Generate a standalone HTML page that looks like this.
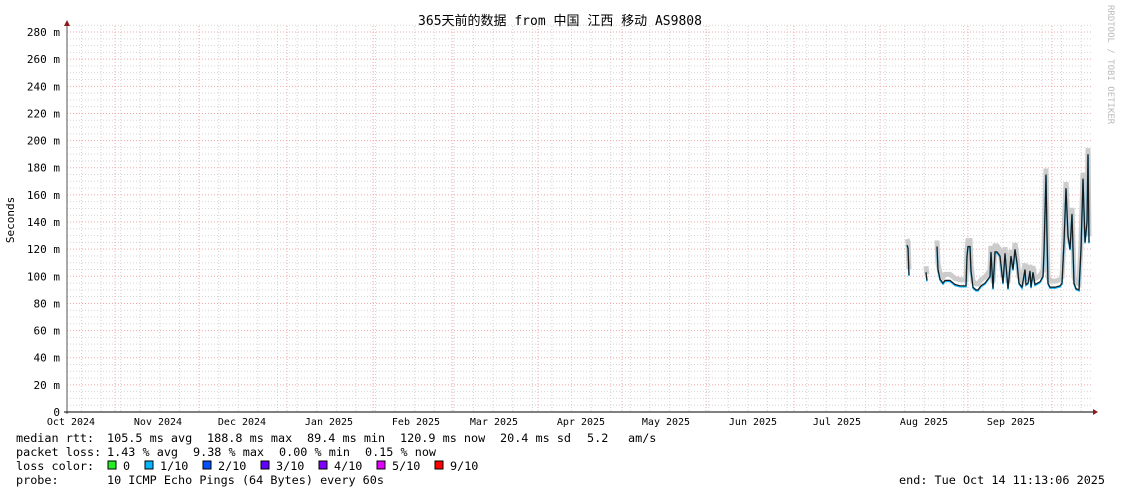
<!DOCTYPE html><html><head><meta charset="utf-8"><style>
html,body{margin:0;padding:0;background:#fff;width:1121px;height:494px;overflow:hidden}
text{font-family:"DejaVu Sans Mono","Liberation Mono","Noto Sans CJK SC",monospace;font-size:11px;fill:#000}
.lg{font-size:11.8px}
</style></head><body>
<svg id="s" width="1121" height="494" xmlns="http://www.w3.org/2000/svg">
<rect width="1121" height="494" fill="#fff"/>
<g id="grid"></g>
<text x="560" y="25" text-anchor="middle" style="font-size:13px;font-family:'DejaVu Sans Mono','Noto Sans CJK SC',monospace">365天前的数据 from 中国 江西 移动 AS9808</text>
<text transform="translate(14,220) rotate(-90)" text-anchor="middle">Seconds</text>
<text transform="translate(1108,5) rotate(90)" style="font-size:9px;fill:#bbb">RRDTOOL / TOBI OETIKER</text>
<g id="ylab"></g>
<g id="xlab"></g>
<g id="data"></g>
<line x1="67" y1="24" x2="67" y2="414" stroke="#555"/>
<line x1="64" y1="412" x2="1094" y2="412" stroke="#000"/>
<polygon points="64,26 70,26 67,20" fill="#8b1a1a"/>
<polygon points="1093,409 1093,415 1098,412" fill="#8b1a1a"/>
<g class="lg">
<text class="lg" x="16" y="442">median rtt:</text>
<text class="lg" x="107" y="442" xml:space="preserve">105.5 ms avg</text>
<text class="lg" x="207" y="442" xml:space="preserve">188.8 ms max</text>
<text class="lg" x="307" y="442" xml:space="preserve">89.4 ms min</text>
<text class="lg" x="400" y="442" xml:space="preserve">120.9 ms now</text>
<text class="lg" x="500" y="442" xml:space="preserve">20.4 ms sd</text>
<text class="lg" x="587" y="442">5.2</text>
<text class="lg" x="628" y="442">am/s</text>
<text class="lg" x="16" y="456">packet loss:</text>
<text class="lg" x="107" y="456">1.43 % avg</text>
<text class="lg" x="193" y="456">9.38 % max</text>
<text class="lg" x="279" y="456">0.00 % min</text>
<text class="lg" x="365" y="456">0.15 % now</text>
<text class="lg" x="16" y="470">loss color:</text>
<text class="lg" x="16" y="484">probe:</text>
<text class="lg" x="107" y="484">10 ICMP Echo Pings (64 Bytes) every 60s</text>
<text class="lg" x="1105" y="484" text-anchor="end">end: Tue Oct 14 11:13:06 2025</text>
</g>
<g id="leg"></g>
</svg>
<script>
var NS="http://www.w3.org/2000/svg";
function el(p,t,a,tx){var e=document.createElementNS(NS,t);for(var k in a)e.setAttribute(k,a[k]);if(tx!=null)e.textContent=tx;document.getElementById(p).appendChild(e);}
function Y(v){return 412-v*1.357;}
for(var v=5;v<=285;v+=5){if(v%20==0)continue;var y=Y(v);el("grid","line",{x1:67,x2:1093,y1:y,y2:y,stroke:"#d4d4d4","stroke-dasharray":"1,2"});}
for(var x=81.5;x<1093;x+=19.6){el("grid","line",{x1:x,x2:x,y1:26,y2:412,stroke:"#d4d4d4","stroke-dasharray":"1,2"});}
var reds=[115,199,287,373,452,538,622,706,794,880,968,1052];
reds.forEach(function(x){el("grid","line",{x1:x,x2:x,y1:26,y2:412,stroke:"#f2a8a8","stroke-dasharray":"1,2"});});
for(var v=0;v<=280;v+=20){var y=Y(v);if(v>0)el("grid","line",{x1:67,x2:1093,y1:y,y2:y,stroke:"#f2a8a8","stroke-dasharray":"1,2"});
el("ylab","text",{x:60,y:y+4,"text-anchor":"end"},v==0?"0":v+" m");}
var m=[["Oct 2024",71],["Nov 2024",158],["Dec 2024",242],["Jan 2025",329],["Feb 2025",416],["Mar 2025",494],["Apr 2025",581],["May 2025",666],["Jun 2025",753],["Jul 2025",837],["Aug 2025",924],["Sep 2025",1011]];
m.forEach(function(a){el("xlab","text",{x:a[1],y:425,"text-anchor":"middle",style:"font-size:10px"},a[0]);});
var d=[[907,123],[908,121],[909,101],null,[926,103],[927,97],null,[937,122],[938,105],[940,98],[943,95],[945,97],[950,97],[955,94],[960,93],[966,93],[967,115],[968,122],[970,122],[971,104],[973,92],[976,90],[978,90],[981,93],[985,95],[990,100],[991,118],[993,91],[995,118],[997,118],[1000,115],[1003,95],[1005,117],[1008,91],[1011,115],[1013,105],[1015,120],[1017,110],[1019,95],[1022,92],[1025,105],[1026,94],[1028,95],[1030,104],[1031,92],[1033,103],[1035,94],[1040,96],[1043,100],[1044,118],[1046,175],[1047,130],[1048,95],[1050,92],[1055,92],[1060,93],[1062,95],[1064,125],[1066,165],[1068,130],[1070,120],[1072,146],[1074,95],[1076,91],[1079,90],[1081,120],[1083,172],[1085,125],[1087,140],[1088,190],[1089,125]];
function pts(yo){var out=[],cur="";d.forEach(function(p){if(!p){out.push(cur);cur="";return;}cur+=p[0]+","+(Y(p[1])+yo)+" ";});out.push(cur);return out;}
[[-6,"#cccccc",5],[1,"#00b0ff",1.5],[0,"#1a1a1a",1.2]].forEach(function(c){
 pts(c[0]).forEach(function(s){el("data","polyline",{points:s,fill:"none",stroke:c[1],"stroke-width":c[2]});});
});
var lg=[["#22ee22","0",108],["#00b7ff","1/10",145],["#0050ff","2/10",203],["#6000ff","3/10",261],["#8000ff","4/10",319],["#e000ff","5/10",377],["#ff0000","9/10",435]];
lg.forEach(function(a){el("leg","rect",{x:a[2],y:461,width:8,height:8,fill:a[0],stroke:"#000","stroke-width":1});el("leg","text",{x:a[2]+15,y:470,"class":"lg"},a[1]);});
</script>
</body></html>
